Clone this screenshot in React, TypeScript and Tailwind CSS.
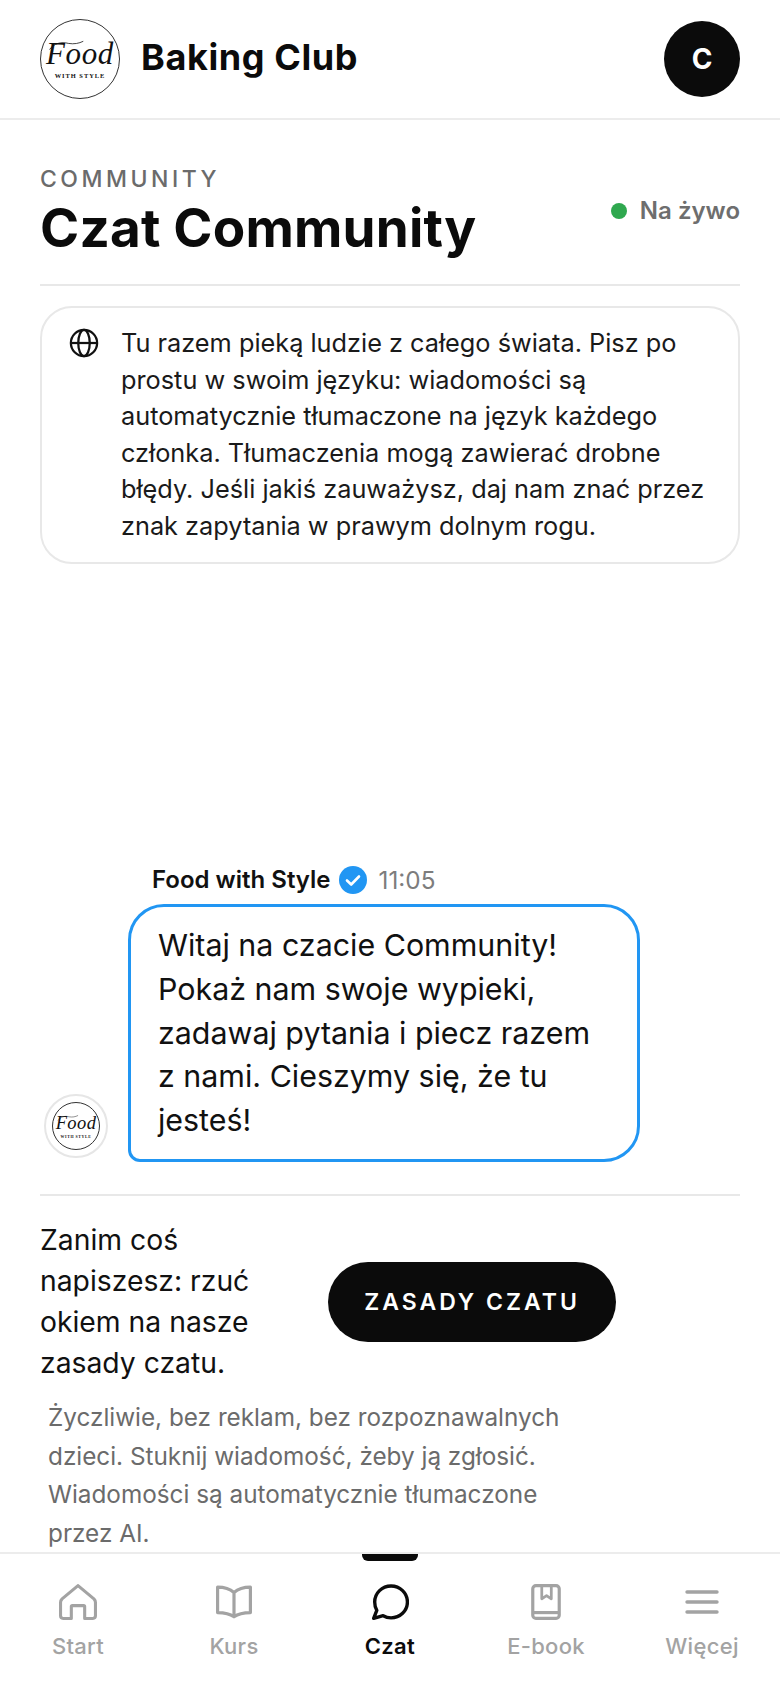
function Logo({ big }: { big?: boolean }) {
  return (
    <div className={`relative flex shrink-0 flex-col items-center rounded-full border border-[#333] bg-white font-['Liberation_Serif',serif] text-[#111] ${big ? "h-20 w-20 pt-[18px]" : "h-12 w-12 pt-[11px]"}`}>
      <svg viewBox="0 0 80 80" className="absolute inset-0 h-full w-full" fill="none" stroke="#111" strokeWidth="0.8" strokeLinecap="round">
        <path d="M9 30c4-6 12-8 19-6 6 1 11 0 15-2" />
      </svg>
      <span className={`italic ${big ? "text-[31px] leading-[31px] tracking-[0.6px]" : "text-[18.500px] leading-[18.500px] tracking-[0.4px]"}`}>Food</span>
      <span className={`font-bold whitespace-nowrap ${big ? "mt-[3px] text-[6.400px] leading-[8px] tracking-[1px]" : "mt-[2px] text-[3.900px] leading-[5px] tracking-[0.6px]"}`}>WITH STYLE</span>
    </div>
  );
}

function NavItem({ label, active, children }: { label: string; active?: boolean; children: React.ReactNode }) {
  return (
    <div className={`relative flex flex-1 flex-col items-center pt-[29px] ${active ? "text-[#0b0b0b]" : "text-[#a3a3a3]"}`}>
      {active && <div className="absolute left-1/2 top-0 h-[7px] w-14 -translate-x-1/2 rounded-b-[6px] bg-[#0b0b0b]" />}
      <div className="flex h-[38px] w-[40px] items-center justify-center">{children}</div>
      <span className={`mt-[10px] text-[22px] leading-[30px] tracking-[0.3px] ${active ? "font-semibold" : "font-medium"}`}>{label}</span>
    </div>
  );
}

export default function App() {
  return (
    <div className="flex h-[1688px] w-[780px] flex-col overflow-hidden bg-white font-['Inter','Liberation_Sans',sans-serif] text-[#0b0b0b]">
      <header className="flex h-[120px] shrink-0 items-center justify-between border-b-2 border-[#ececec] pl-10 pr-10">
        <div className="flex items-center gap-[21px]">
          <Logo big />
          <span className="relative -top-[2px] text-[36px] font-bold leading-none tracking-[0.6px]">Baking Club</span>
        </div>
        <div className="flex h-[76px] w-[76px] items-center justify-center rounded-full bg-[#0b0b0b] text-[28px] font-bold text-white">C</div>
      </header>

      <main className="flex min-h-0 flex-1 flex-col px-10">
        <div className="flex items-start justify-between border-b-2 border-[#e8e8e8] pb-[23px] pt-[45px]">
          <div>
            <div className="text-[23px] font-medium leading-7 tracking-[3.500px] text-[#6b6b6b]">COMMUNITY</div>
            <h1 className="mt-[2px] text-[53px] font-bold leading-[66px] tracking-[0.2px]">Czat Community</h1>
          </div>
          <div className="mt-[30px] flex items-center gap-[13px]">
            <span className="h-4 w-4 rounded-full bg-[#2fa84f]" />
            <span className="text-[24px] font-semibold leading-8 text-[#6e6e6e]">Na żywo</span>
          </div>
        </div>

        <div className="mt-[20px] flex rounded-[32px] border-2 border-[#e8e8e8] py-[17px] pl-[27px] pr-5">
          <svg width="30" height="30" viewBox="0 0 24 24" fill="none" stroke="#111" strokeWidth="1.8" className="mt-[3px] shrink-0">
            <circle cx="12" cy="12" r="10.5" />
            <ellipse cx="12" cy="12" rx="4.6" ry="10.5" />
            <path d="M1.5 12h21" />
          </svg>
          <p className="ml-[22px] text-[25.3px] leading-[36.6px] text-[#1a1a1a]">
            Tu razem pieką ludzie z całego świata. Pisz po prostu w swoim języku: wiadomości są automatycznie tłumaczone na język każdego członka. Tłumaczenia mogą zawierać drobne błędy. Jeśli jakiś zauważysz, daj nam znać przez znak zapytania w prawym dolnym rogu.
          </p>
        </div>

        <div className="flex flex-1 flex-col justify-end border-b-2 border-[#e8e8e8] pb-8">
          <div className="flex items-center pl-[112px]">
            <span className="text-[24px] font-semibold leading-8 text-[#111]">Food with Style</span>
            <svg width="28" height="28" viewBox="0 0 28 28" className="ml-[8px]">
              <circle cx="14" cy="14" r="14" fill="#2196f3" />
              <path d="M8 14.5l4.2 4L20 10.5" fill="none" stroke="#fff" strokeWidth="2.6" strokeLinecap="round" strokeLinejoin="round" />
            </svg>
            <span className="ml-3 text-[24.300px] leading-8 text-[#7d7d7d]">11:05</span>
          </div>
          <div className="mt-[8px] flex items-end">
            <div className="mb-[4px] ml-[4px] flex h-[64px] w-[64px] shrink-0 items-center justify-center rounded-full border-2 border-[#e6e6e6] bg-white">
              <Logo />
            </div>
            <div className="ml-[20px] w-[512px] rounded-[36px] rounded-bl-[12px] border-[3px] border-[#2196f3] px-[27px] py-[17px] text-[30.4px] leading-[43.6px] text-[#111]">
              Witaj na czacie Community! Pokaż nam swoje wypieki, zadawaj pytania i piecz razem z nami. Cieszymy się, że tu jesteś!
            </div>
          </div>
        </div>

        <div className="mt-[24px] flex items-center">
          <p className="w-[240px] text-[28.3px] leading-[41px] text-[#111]">Zanim coś napiszesz: rzuć okiem na nasze zasady czatu.</p>
          <div className="ml-[48px] flex h-[80px] w-[288px] items-center justify-center rounded-full bg-[#0b0b0b] text-[23px] font-semibold tracking-[3px] text-white">ZASADY CZATU</div>
        </div>
        <p className="ml-2 mt-[14px] w-[540px] text-[24.3px] leading-[38.4px] text-[#6b6b6b]">
          Życzliwie, bez reklam, bez rozpoznawalnych dzieci. Stuknij wiadomość, żeby ją zgłosić. Wiadomości są automatycznie tłumaczone przez AI.
        </p>
      </main>

      <nav className="flex h-[136px] shrink-0 border-t-2 border-[#ececec]">
        <NavItem label="Start">
          <svg width="38" height="36" viewBox="0 0 37 35" fill="none" stroke="currentColor" strokeWidth="3" strokeLinejoin="round" strokeLinecap="round">
            <path d="M18.500 1.500 3 14.500Q1.500 16 1.500 18V31Q1.500 33.500 4 33.500H12V22Q12 21 13 21H24Q25 21 25 22V33.500H33Q35.500 33.500 35.500 31V18Q35.500 16 34 14.500Z" />
          </svg>
        </NavItem>
        <NavItem label="Kurs">
          <svg width="36" height="34" viewBox="0 0 34 32" fill="none" stroke="currentColor" strokeWidth="3" strokeLinejoin="round">
            <path d="M17 7C13 3.500 7 2 1.500 2V26C7 26 13 27 17 30 21 27 27 26 32.500 26V2C27 2 21 3.500 17 7ZM17 7V30" />
          </svg>
        </NavItem>
        <NavItem label="Czat" active>
          <svg width="38" height="36" viewBox="0 0 36 34" fill="none" stroke="currentColor" strokeWidth="3.200" strokeLinejoin="round">
            <path d="M2.500 32.500 5.500 25C4 22.500 3.500 20 3.500 17 3.500 8.500 10.500 1.800 19 1.800S34.500 8.500 34.500 17 27.500 32 19 32C16.200 32 13.700 31.300 11.500 30Z" />
          </svg>
        </NavItem>
        <NavItem label="E-book">
          <svg width="30" height="36" viewBox="0 0 28 34" fill="none" stroke="currentColor" strokeWidth="3" strokeLinejoin="round">
            <rect x="1.500" y="1.500" width="25" height="31" rx="3" />
            <path d="M1.500 27H26.500" />
            <path d="M10 1.500V14L14.500 11 19 14V1.500" strokeWidth="2.600" />
          </svg>
        </NavItem>
        <NavItem label="Więcej">
          <svg width="34" height="26" viewBox="0 0 34 26" fill="none" stroke="currentColor" strokeWidth="3.4" strokeLinecap="round">
            <path d="M2 3h30M2 13h30M2 23h30" />
          </svg>
        </NavItem>
      </nav>
    </div>
  );
}
